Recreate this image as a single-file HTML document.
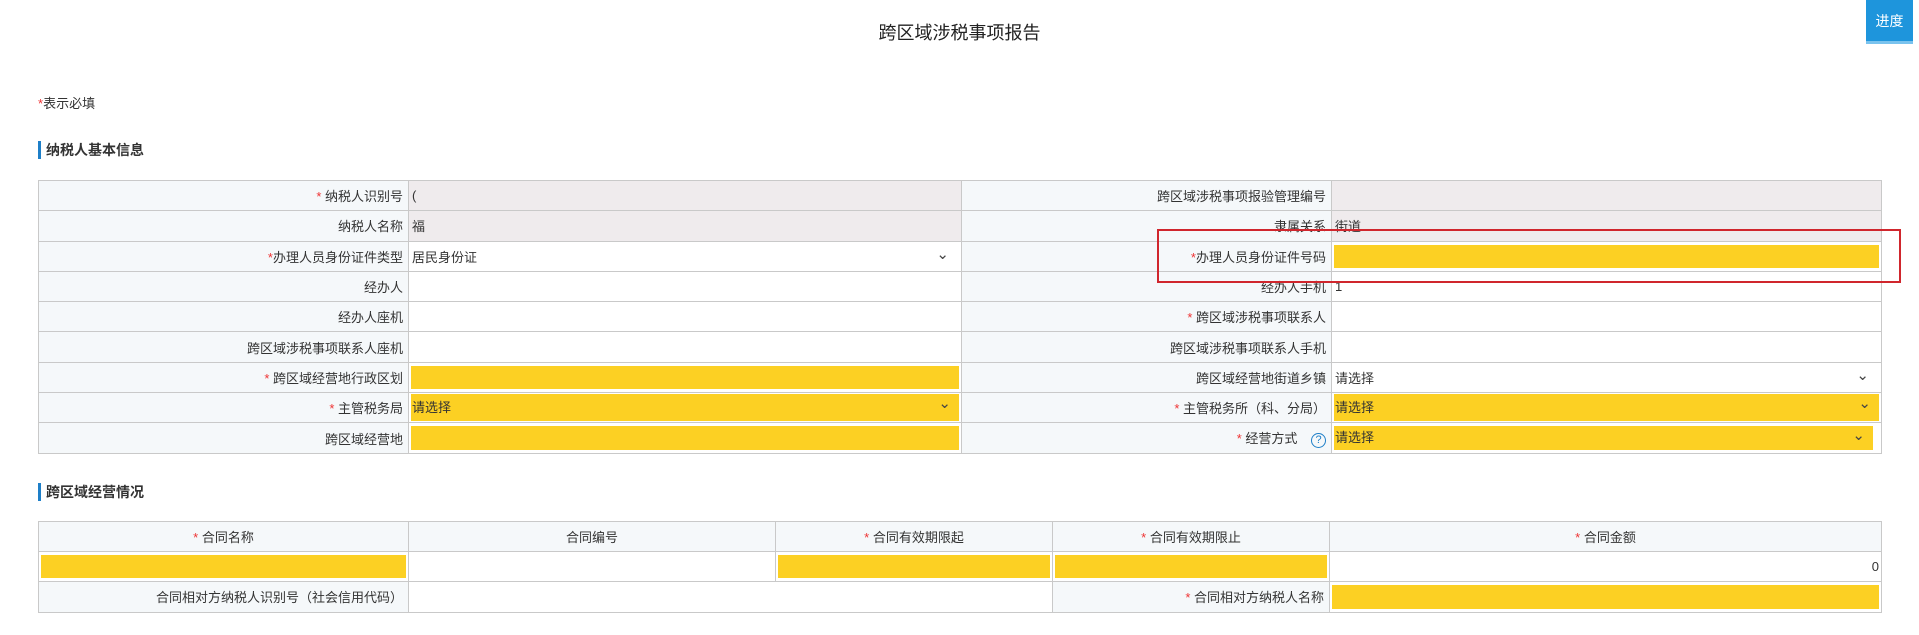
<!DOCTYPE html>
<html><head><meta charset="utf-8">
<style>
*{box-sizing:border-box;margin:0;padding:0}
body{width:1919px;height:635px;background:#fff;font-family:"Liberation Sans","Noto Sans CJK SC",sans-serif;font-size:13px;color:#333;position:relative;overflow:hidden}
.title{position:absolute;top:19px;left:0;width:1919px;text-align:center;font-size:18px;color:#222}
.btn{position:absolute;left:1866px;top:0;width:47px;height:44px;background:#1e95dc;color:#fff;font-size:14px;text-align:center;line-height:42px;border-bottom:3px solid #7ac3ee}
.req{position:absolute;left:38px;top:93px;font-size:13px}
.r{color:#e33}
.sec{position:absolute;left:38px;border-left:3px solid #1e7fc8;padding-left:5px;font-weight:bold;font-size:14px;height:18px;line-height:18px}
table{position:absolute;left:38px;border-collapse:collapse;table-layout:fixed}
td{border:1px solid #c9c9c9;height:30.3px;padding:0;position:relative;white-space:nowrap}
td.l{background:#f5f8fa;text-align:right;padding-right:5px}
td.g{background:#efebed}
td.v{padding-left:3px}
.y{position:absolute;left:2px;right:2px;top:3px;bottom:3px;background:#fcd023;padding-left:1px;line-height:24px}
.y.t{top:1px;bottom:1px;line-height:28px}
.dd::after{content:"⌄";position:absolute;right:8px;top:-4px;font-size:15px;color:#444;line-height:28px}
.dd2::after{content:"⌄";position:absolute;right:12px;top:3px;font-size:15px;color:#444}
td.h{background:#f5f8fa;text-align:center;height:30px}
.q{display:inline-block;width:15px;height:15px;border:1px solid #1e7fc8;border-radius:50%;color:#1e7fc8;font-size:11px;line-height:13px;text-align:center;margin-left:10px;vertical-align:middle}
.redbox{position:absolute;left:1157px;top:229px;width:744px;height:54px;border:2px solid #d0262d}
</style></head><body>
<div class="title">跨区域涉税事项报告</div>
<div class="btn">进度</div>
<div class="req"><span class="r">*</span>表示必填</div>
<div class="sec" style="top:141px">纳税人基本信息</div>
<table style="top:180px;width:1843px">
<colgroup><col style="width:370px"><col style="width:553px"><col style="width:370px"><col style="width:550px"></colgroup>
<tr><td class="l"><span class="r">*</span> 纳税人识别号</td><td class="g v">(</td><td class="l">跨区域涉税事项报验管理编号</td><td class="g"></td></tr>
<tr><td class="l">纳税人名称</td><td class="g v">福</td><td class="l">隶属关系</td><td class="g v">街道</td></tr>
<tr><td class="l"><span class="r">*</span>办理人员身份证件类型</td><td class="v dd2">居民身份证</td><td class="l"><span class="r">*</span>办理人员身份证件号码</td><td><div class="y"></div></td></tr>
<tr><td class="l">经办人</td><td class="v"></td><td class="l">经办人手机</td><td class="v">1</td></tr>
<tr><td class="l">经办人座机</td><td></td><td class="l"><span class="r">*</span> 跨区域涉税事项联系人</td><td></td></tr>
<tr><td class="l">跨区域涉税事项联系人座机</td><td></td><td class="l">跨区域涉税事项联系人手机</td><td></td></tr>
<tr><td class="l"><span class="r">*</span> 跨区域经营地行政区划</td><td><div class="y"></div></td><td class="l">跨区域经营地街道乡镇</td><td class="v dd2">请选择</td></tr>
<tr><td class="l"><span class="r">*</span> 主管税务局</td><td><div class="y t dd">请选择</div></td><td class="l"><span class="r">*</span> 主管税务所（科、分局）</td><td><div class="y t dd">请选择</div></td></tr>
<tr><td class="l">跨区域经营地</td><td><div class="y"></div></td><td class="l"><span class="r">*</span> 经营方式 <span class="q">?</span></td><td><div class="y dd" style="right:8px">请选择</div></td></tr>
</table>
<div class="redbox"></div>
<div class="sec" style="top:483px">跨区域经营情况</div>
<table style="top:521px;width:1843px">
<colgroup><col style="width:370px"><col style="width:367px"><col style="width:277px"><col style="width:277px"><col style="width:552px"></colgroup>
<tr><td class="h"><span class="r">*</span> 合同名称</td><td class="h">合同编号</td><td class="h"><span class="r">*</span> 合同有效期限起</td><td class="h"><span class="r">*</span> 合同有效期限止</td><td class="h"><span class="r">*</span> 合同金额</td></tr>
<tr><td><div class="y"></div></td><td></td><td><div class="y"></div></td><td><div class="y"></div></td><td style="text-align:right;padding-right:2px">0</td></tr>
<tr><td class="l">合同相对方纳税人识别号（社会信用代码）</td><td colspan="2"></td><td class="l"><span class="r">*</span> 合同相对方纳税人名称</td><td><div class="y"></div></td></tr>
</table>
</body></html>
